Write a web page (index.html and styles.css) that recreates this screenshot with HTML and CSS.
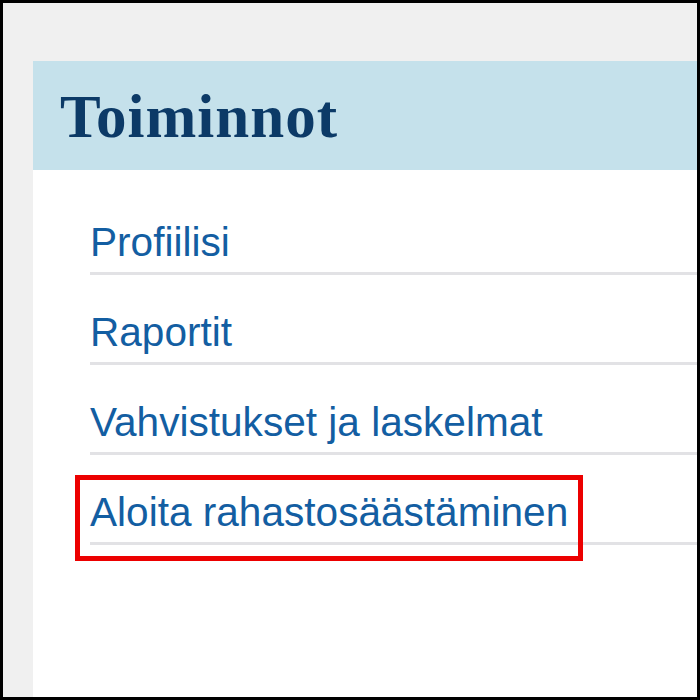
FILE: index.html
```html
<!DOCTYPE html>
<html lang="fi">
<head>
  <meta charset="UTF-8" />
  <meta name="viewport" content="width=device-width, initial-scale=1.0"/>
  <title>Toiminnot</title>
  <link rel="stylesheet" href="styles.css">
</head>
<body>
  <div class="frame">
    <div class="panel">
      <div class="panel-header">
        <h1>Toiminnot</h1>
      </div>
      <ul class="actions">
        <li><a href="#">Profiilisi</a></li>
        <li><a href="#">Raportit</a></li>
        <li><a href="#">Vahvistukset ja laskelmat</a></li>
        <li class="marked">
          <a href="#">Aloita rahastosäästäminen</a>
          <span class="highlight"></span>
        </li>
      </ul>
    </div>
  </div>
</body>
</html>
```

FILE: styles.css
```css
body {
  margin: 0;
  font-family: "Liberation Sans", Arial, sans-serif;
  background: #fff;
}

.frame {
  width: 700px;
  height: 700px;
  box-sizing: border-box;
  border: 3px solid #000;
  background: #f0f0f0;
  padding: 58px 0 0 30px;
  overflow: hidden;
}

.panel {
  height: 100%;
  background: #fff;
}

.panel-header {
  height: 109px;
  box-sizing: border-box;
  background: #c5e1eb;
  padding: 26px 0 0 27px;
}

.panel-header h1 {
  margin: 0;
  font-family: "Liberation Serif", "Times New Roman", serif;
  font-weight: bold;
  font-size: 61px;
  line-height: 60px;
  letter-spacing: 1px;
  color: #0c3a67;
}

.actions {
  list-style: none;
  margin: 0;
  padding: 15px 0 0 57px;
}

.actions li {
  padding: 34px 0 7px;
  border-bottom: 3px solid #e2e2e5;
}

.actions a {
  font-size: 40.6px;
  line-height: 46px;
  color: #135ea2;
  text-decoration: none;
}

.actions li.marked {
  position: relative;
}

.highlight {
  position: absolute;
  left: -15px;
  top: 20px;
  width: 508px;
  height: 86px;
  box-sizing: border-box;
  border: 5px solid #ec0000;
}
```
